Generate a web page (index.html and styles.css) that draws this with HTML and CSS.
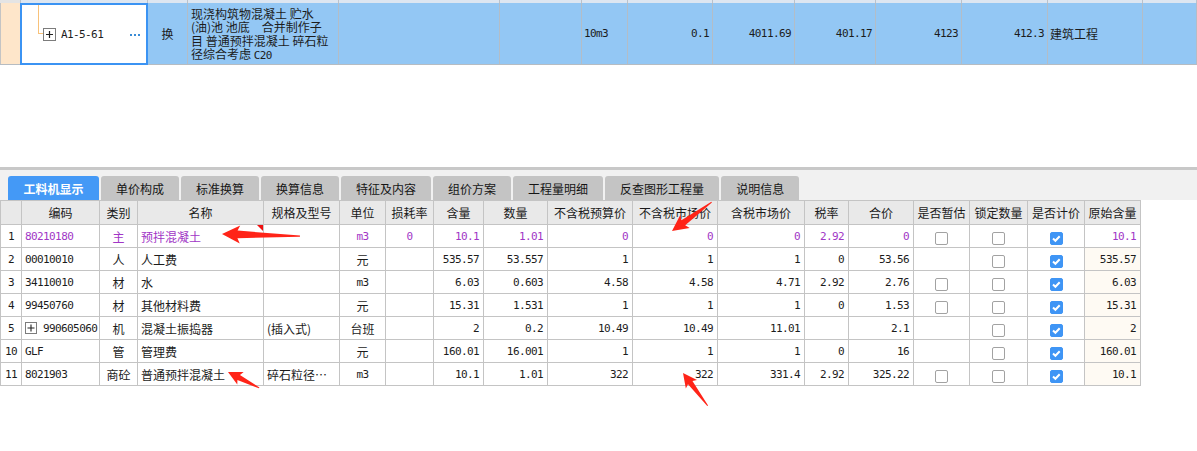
FILE: index.html
```html
<!DOCTYPE html>
<html lang="zh-CN">
<head>
<meta charset="utf-8">
<title>工料机显示</title>
<link rel="stylesheet" href="styles.css">
</head>
<body>
<div class="top-strip grid-top">
  <span></span><span></span><span></span><span></span><span></span><span></span><span></span><span></span><span></span><span></span><span></span><span></span><span></span><span></span>
</div>
<div class="top-row grid-top">
  <div class="peach"></div>
  <div class="sel">
    <span class="tree"></span>
    <span class="pbox"><svg width="11" height="11" viewBox="0 0 11 11"><path d="M2 5.5H9M5.5 2V9" stroke="#222" stroke-width="1.2"/></svg></span>
    <span class="n code">A1-5-61</span>
    <span class="dots"><i></i><i></i><i></i></span>
  </div>
  <div class="cc">换</div>
  <div class="desc">
    <div class="dl">现浇构筑物混凝土 贮水</div>
    <div class="dl">(油)池 池底　合并制作子</div>
    <div class="dl">目 普通预拌混凝土 碎石粒</div>
    <div class="dl">径综合考虑 <span class="n">C20</span></div>
  </div>
  <div></div>
  <div></div>
  <div class="n">10m3</div>
  <div class="n rr">0.1</div>
  <div class="n rr">4011.69</div>
  <div class="n rr">401.17</div>
  <div class="n rr">4123</div>
  <div class="n rr">412.3</div>
  <div>建筑工程</div>
  <div></div>
</div>
<div class="blank"></div>
<div class="panel">
  <div class="tabbar">
    <span class="tab active">工料机显示</span>
    <span class="tab">单价构成</span>
    <span class="tab">标准换算</span>
    <span class="tab">换算信息</span>
    <span class="tab">特征及内容</span>
    <span class="tab">组价方案</span>
    <span class="tab">工程量明细</span>
    <span class="tab">反查图形工程量</span>
    <span class="tab">说明信息</span>
  </div>
  <table class="grid">
    <colgroup>
      <col class="w21"><col class="w78"><col class="w38"><col class="w126"><col class="w76"><col class="w46"><col class="w48"><col class="w50"><col class="w64"><col class="w85"><col class="w85"><col class="w87"><col class="w44"><col class="w65"><col class="w56"><col class="w58"><col class="w57"><col class="w56">
    </colgroup>
    <thead>
      <tr><th></th><th>编码</th><th>类别</th><th>名称</th><th>规格及型号</th><th>单位</th><th>损耗率</th><th>含量</th><th>数量</th><th>不含税预算价</th><th>不含税市场价</th><th>含税市场价</th><th>税率</th><th>合价</th><th>是否暂估</th><th>锁定数量</th><th>是否计价</th><th>原始含量</th></tr>
    </thead>
    <tbody>
      <tr class="main">
        <td class="c n rowno">1</td><td class="n">80210180</td><td class="c">主</td><td class="flag">预拌混凝土</td><td></td><td class="c n">m3</td><td class="c n">0</td><td class="r n">10.1</td><td class="r n">1.01</td><td class="r n">0</td><td class="r n">0</td><td class="r n">0</td><td class="r n">2.92</td><td class="r n">0</td>
        <td class="c"><span class="cb"></span></td><td class="c"><span class="cb"></span></td><td class="c"><span class="cb on"><svg width="13" height="13" viewBox="0 0 13 13"><path d="M3 6.5L5.4 8.8L9.7 4.2" fill="none" stroke="#fff" stroke-width="2"/></svg></span></td><td class="r n">10.1</td>
      </tr>
      <tr>
        <td class="c n">2</td><td class="n">00010010</td><td class="c">人</td><td>人工费</td><td></td><td class="c">元</td><td></td><td class="r n">535.57</td><td class="r n">53.557</td><td class="r n">1</td><td class="r n">1</td><td class="r n">1</td><td class="r n">0</td><td class="r n">53.56</td>
        <td></td><td class="c"><span class="cb"></span></td><td class="c"><span class="cb on"><svg width="13" height="13" viewBox="0 0 13 13"><path d="M3 6.5L5.4 8.8L9.7 4.2" fill="none" stroke="#fff" stroke-width="2"/></svg></span></td><td class="r n orig">535.57</td>
      </tr>
      <tr>
        <td class="c n">3</td><td class="n">34110010</td><td class="c">材</td><td>水</td><td></td><td class="c n">m3</td><td></td><td class="r n">6.03</td><td class="r n">0.603</td><td class="r n">4.58</td><td class="r n">4.58</td><td class="r n">4.71</td><td class="r n">2.92</td><td class="r n">2.76</td>
        <td class="c"><span class="cb"></span></td><td class="c"><span class="cb"></span></td><td class="c"><span class="cb on"><svg width="13" height="13" viewBox="0 0 13 13"><path d="M3 6.5L5.4 8.8L9.7 4.2" fill="none" stroke="#fff" stroke-width="2"/></svg></span></td><td class="r n orig">6.03</td>
      </tr>
      <tr>
        <td class="c n">4</td><td class="n">99450760</td><td class="c">材</td><td>其他材料费</td><td></td><td class="c">元</td><td></td><td class="r n">15.31</td><td class="r n">1.531</td><td class="r n">1</td><td class="r n">1</td><td class="r n">1</td><td class="r n">0</td><td class="r n">1.53</td>
        <td class="c"><span class="cb"></span></td><td class="c"><span class="cb"></span></td><td class="c"><span class="cb on"><svg width="13" height="13" viewBox="0 0 13 13"><path d="M3 6.5L5.4 8.8L9.7 4.2" fill="none" stroke="#fff" stroke-width="2"/></svg></span></td><td class="r n orig">15.31</td>
      </tr>
      <tr>
        <td class="c n">5</td><td class="n"><span class="pbox small"><svg width="10" height="10" viewBox="0 0 10 10"><path d="M1.5 5H8.5M5 1.5V8.5" stroke="#222" stroke-width="1.1"/></svg></span><span class="after-box">990605060</span></td><td class="c">机</td><td>混凝土振捣器</td><td>(插入式)</td><td class="c">台班</td><td></td><td class="r n">2</td><td class="r n">0.2</td><td class="r n">10.49</td><td class="r n">10.49</td><td class="r n">11.01</td><td></td><td class="r n">2.1</td>
        <td></td><td class="c"><span class="cb"></span></td><td class="c"><span class="cb on"><svg width="13" height="13" viewBox="0 0 13 13"><path d="M3 6.5L5.4 8.8L9.7 4.2" fill="none" stroke="#fff" stroke-width="2"/></svg></span></td><td class="r n orig">2</td>
      </tr>
      <tr>
        <td class="c n">10</td><td class="n">GLF</td><td class="c">管</td><td>管理费</td><td></td><td class="c">元</td><td></td><td class="r n">160.01</td><td class="r n">16.001</td><td class="r n">1</td><td class="r n">1</td><td class="r n">1</td><td class="r n">0</td><td class="r n">16</td>
        <td></td><td class="c"><span class="cb"></span></td><td class="c"><span class="cb on"><svg width="13" height="13" viewBox="0 0 13 13"><path d="M3 6.5L5.4 8.8L9.7 4.2" fill="none" stroke="#fff" stroke-width="2"/></svg></span></td><td class="r n orig">160.01</td>
      </tr>
      <tr>
        <td class="c n">11</td><td class="n">8021903</td><td class="c">商砼</td><td>普通预拌混凝土</td><td>碎石粒径…</td><td class="c n">m3</td><td></td><td class="r n">10.1</td><td class="r n">1.01</td><td class="r n">322</td><td class="r n">322</td><td class="r n">331.4</td><td class="r n">2.92</td><td class="r n">325.22</td>
        <td class="c"><span class="cb"></span></td><td class="c"><span class="cb"></span></td><td class="c"><span class="cb on"><svg width="13" height="13" viewBox="0 0 13 13"><path d="M3 6.5L5.4 8.8L9.7 4.2" fill="none" stroke="#fff" stroke-width="2"/></svg></span></td><td class="r n orig">10.1</td>
      </tr>
    </tbody>
  </table>
</div>
<svg class="marks" width="1197" height="451" viewBox="0 0 1197 451">
  <g fill="#ff2418">
    <polygon transform="translate(222 234) rotate(1.5)" points="0,0 18,-9 15.5,-3.8 78,-0.6 78,0.6 15.5,3.8 18,9"/>
    <polygon transform="translate(672 231) rotate(-36)" points="0,0 16,-8 14,-3.2 49,-0.5 49,0.5 14,3.2 16,8"/>
    <polygon transform="translate(228 372) rotate(27)" points="0,0 14,-7 12,-2.8 35,-0.5 35,0.5 12,2.8 14,7"/>
    <polygon transform="translate(683 373) rotate(53)" points="0,0 14,-7 12,-2.8 41,-0.5 41,0.5 12,2.8 14,7"/>
  </g>
</svg>
</body>
</html>
```
FILE: styles.css
```css
* { box-sizing: border-box; }
html, body { margin: 0; padding: 0; background: #fff; }
body {
  width: 1197px;
  height: 451px;
  overflow: hidden;
  position: relative;
  font-family: "Noto Sans CJK SC", "Liberation Sans", sans-serif;
  font-size: 12px;
  color: #1c1c1c;
}
.n {
  font-family: "DejaVu Sans Mono", "Liberation Mono", monospace;
  font-size: 11px;
  letter-spacing: -0.6px;
}

/* upper grid */
.grid-top {
  display: grid;
  grid-template-columns: 21px 127px 40px 151px 161px 82px 46px 85px 82px 81px 86px 86px 95px 1fr;
}
.top-strip { height: 3px; background: #dde6f1; }
.top-strip span { border-right: 1px solid #b9c2cc; }
.top-strip span:first-child { background: #e4e4e4; }

.top-row {
  height: 62px;
  background: #93c7f4;
  border-bottom: 1px solid #b6bcc2;
}
.top-row > div {
  border-right: 1px solid #b3bdc7;
  display: flex;
  align-items: center;
  padding: 0 2px;
  min-width: 0;
}
.top-row .rr { justify-content: flex-end; padding-right: 3px; }
.top-row .cc { justify-content: center; }
.top-row .peach { background: #fee6ca; border-left: 1px solid #c4c4c4; }
.top-row .sel {
  background: #fff;
  border: 2px solid #3b93f3;
  margin: 0 0 -1px -1px;
  padding: 0 6px 0 0;
  align-items: center;
}
.tree {
  align-self: flex-start;
  width: 5px;
  height: 29px;
  margin-left: 16px;
  border-left: 1px solid #f8c27a;
  border-bottom: 1px solid #f8c27a;
}
.pbox {
  width: 13px;
  height: 13px;
  border: 1px solid #7c7c7c;
  background: #fff;
  display: inline-flex;
  align-items: center;
  justify-content: center;
  flex: none;
}
.pbox.small { width: 12px; height: 12px; vertical-align: middle; margin-right: 6px; }
.code { margin-left: 5px; font-size: 11px; }
.dots { margin-left: auto; display: flex; gap: 2px; padding-top: 1px; }
.dots i { width: 2px; height: 2px; background: #3a8cd6; display: block; }
.top-row .desc {
  flex-direction: column;
  justify-content: center;
  align-items: flex-start;
  padding-left: 3px;
}
.dl {
  height: 13.5px;
  line-height: 13.5px;
  white-space: nowrap;
}

.blank { height: 102px; }

/* lower panel */
.panel { border-top: 3px solid #c8c8c8; }
.tabbar {
  background: #f1f1f1;
  padding: 6px 0 0 8px;
  height: 30px;
  display: flex;
  gap: 2px;
}
.tab {
  height: 24px;
  padding: 0 15px;
  background: #c4c4c4;
  border-radius: 3px 3px 0 0;
  display: flex;
  align-items: center;
  justify-content: center;
  color: #151515;
  white-space: nowrap;
}
.tab.active {
  background: #4499f6;
  color: #fff;
  font-weight: bold;
  padding: 0 15.5px;
}

.grid {
  border-collapse: collapse;
  table-layout: fixed;
  width: 1140px;
  background: #fff;
}
.grid th, .grid td {
  border: 1px solid #c4c4c4;
  height: 23px;
  padding: 0 3px;
  white-space: nowrap;
  overflow: hidden;
  vertical-align: middle;
  text-align: left;
}
.grid th {
  height: 24px;
  background: #e9e9e9;
  font-weight: normal;
  text-align: center;
  color: #1a1a1a;
}
.grid td.c { text-align: center; }
.grid td.r { text-align: right; padding-right: 4px; }
.grid .main td { color: #a136c6; }
.grid .main td.rowno { color: #1c1c1c; }
.grid td.flag { position: relative; }
.grid td.flag::after {
  content: "";
  position: absolute;
  top: 0;
  right: 0;
  border-top: 6px solid #f01010;
  border-left: 6px solid transparent;
}
.grid td.orig { background: #fefaf3; }
.after-box { vertical-align: middle; }

.w21 { width: 21px; } .w78 { width: 78px; } .w38 { width: 38px; } .w126 { width: 126px; }
.w76 { width: 76px; } .w46 { width: 46px; } .w48 { width: 48px; } .w50 { width: 50px; }
.w64 { width: 64px; } .w85 { width: 85px; } .w87 { width: 87px; } .w44 { width: 44px; }
.w65 { width: 65px; } .w56 { width: 56px; } .w58 { width: 58px; } .w57 { width: 57px; }

.cb {
  display: inline-block;
  width: 13px;
  height: 13px;
  border: 1px solid #a2a2a2;
  border-radius: 2px;
  background: #fff;
  vertical-align: middle;
}
.cb.on {
  background: #3f95f5;
  border-color: #3f95f5;
}
.cb.on svg { display: block; margin: -1px 0 0 -1px; width: 13px; height: 13px; }

.marks {
  position: absolute;
  left: 0;
  top: 0;
  pointer-events: none;
}
```
